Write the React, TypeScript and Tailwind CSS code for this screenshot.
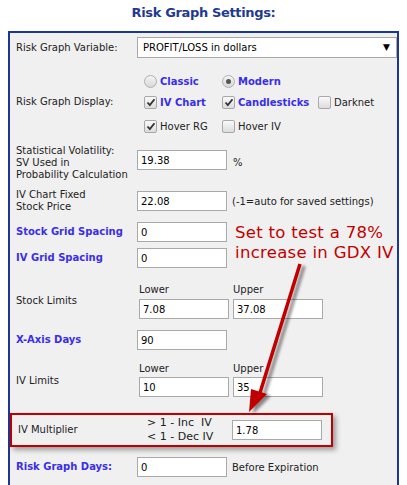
import React from 'react';

const font = { fontFamily: '"DejaVu Sans", Verdana, sans-serif' };

const Input = ({ value, className = '' }: { value: string; className?: string }) => (
  <div className={`w-[90px] h-[20px] bg-white border border-[#a9a9a9] pl-[3px] flex items-center text-[10px] text-black ${className}`}>
    {value}
  </div>
);

const Check = ({ checked }: { checked?: boolean }) => (
  <span className="inline-flex w-[13px] h-[13px] rounded-[2px] border border-[#a8a8a8] bg-gradient-to-b from-[#fafafa] to-[#dcdcdc] items-center justify-center mr-[3px] shrink-0">
    {checked && (
      <svg width="10" height="9" viewBox="0 0 10 9">
        <path d="M1.5 4.5 L3.8 7 L8.5 1.2" stroke="#333" strokeWidth="1.8" fill="none" />
      </svg>
    )}
  </span>
);

const Radio = ({ checked }: { checked?: boolean }) => (
  <span className="inline-flex w-[13px] h-[13px] rounded-full border border-[#b0b0b0] bg-gradient-to-b from-[#f4f4f4] to-[#d8d8d8] items-center justify-center mr-[3px] shrink-0">
    {checked && <span className="w-[5px] h-[5px] rounded-full bg-[#555]" />}
  </span>
);

const Label = ({ children, blue }: { children: React.ReactNode; blue?: boolean }) => (
  <div className={`w-[121px] shrink-0 leading-[12px] ${blue ? 'font-bold text-[#3a2ee6]' : 'text-[#222]'}`}>{children}</div>
);

export default function App() {
  return (
    <div className="relative w-[407px] h-[485px] bg-white overflow-hidden text-[10px]" style={font}>
      <div className="h-[31px] flex justify-center pt-[3px] text-[13px] tracking-[-0.35px] font-bold text-[#1f3a8f]">Risk Graph Settings:</div>
      <div className="mx-[8px] h-[470px] border-2 border-[#1b3791] bg-[#f0f0f0] pl-[6px]">
        <div className="flex items-center mt-[4px] h-[21px]">
          <Label>Risk Graph Variable:</Label>
          <div className="w-[260px] h-[21px] bg-white border border-[#a9a9a9] flex items-center justify-between pl-[5px] pr-[6px] text-black">
            <span>PROFIT/LOSS in dollars</span>
            <span className="text-[9px]">▼</span>
          </div>
        </div>

        <div className="flex items-center h-[18px] mt-[14px] pl-[128px] font-bold text-[#3a2ee6]">
          <div className="flex items-center w-[78px]"><Radio />Classic</div>
          <div className="flex items-center"><Radio checked />Modern</div>
        </div>
        <div className="flex items-center h-[18px] mt-[3px]">
          <Label>Risk Graph Display:</Label>
          <div className="ml-[7px] flex items-center w-[78px] font-bold text-[#3a2ee6]"><Check checked />IV Chart</div>
          <div className="flex items-center w-[96px] font-bold text-[#3a2ee6]"><Check checked />Candlesticks</div>
          <div className="flex items-center text-[#222]"><Check />Darknet</div>
        </div>
        <div className="flex items-center h-[18px] mt-[6px] pl-[128px] text-[#222]">
          <div className="flex items-center w-[78px]"><Check checked />Hover RG</div>
          <div className="flex items-center"><Check />Hover IV</div>
        </div>

        <div className="flex items-start mt-[8px]">
          <div className="mt-[2px]">
            <Label>Statistical Volatility:<br />SV Used in<br />Probability Calculation</Label>
          </div>
          <Input value="19.38" className="mt-[7px]" />
          <span className="ml-[6px] mt-[12px] text-[#222]">%</span>
        </div>
        <div className="flex items-center mt-[8px]">
          <Label>IV Chart Fixed<br />Stock Price</Label>
          <Input value="22.08" />
          <span className="ml-[5px] text-[#222]">(-1=auto for saved settings)</span>
        </div>
        <div className="flex items-center mt-[9px]">
          <Label blue>Stock Grid Spacing</Label>
          <Input value="0" />
        </div>
        <div className="flex items-center mt-[6px]">
          <Label blue>IV Grid Spacing</Label>
          <Input value="0" />
        </div>

        <div className="flex items-end mt-[14px]">
          <Label><div className="mb-[12px]">Stock Limits</div></Label>
          <div className="ml-[2px] flex flex-col">
            <span className="text-[#222] mb-[2px]">Lower</span>
            <Input value="7.08" />
          </div>
          <div className="ml-[4px] flex flex-col">
            <span className="text-[#222] mb-[2px]">Upper</span>
            <Input value="37.08" />
          </div>
        </div>
        <div className="flex items-center mt-[11px]">
          <Label blue>X-Axis Days</Label>
          <Input value="90" />
        </div>
        <div className="flex items-end mt-[11px]">
          <Label><div className="mb-[10px]">IV Limits</div></Label>
          <div className="ml-[2px] flex flex-col">
            <span className="text-[#222] mb-[1px]">Lower</span>
            <Input value="10" />
          </div>
          <div className="ml-[4px] flex flex-col">
            <span className="text-[#222] mb-[1px]">Upper</span>
            <Input value="35" />
          </div>
        </div>

        <div className="-ml-[6px] mt-[16px] w-[323px] h-[34px] border-2 border-[#c00000] shadow-[3px_3px_5px_rgba(0,0,0,0.35)] flex items-center pl-[6px]">
          <Label>IV Multiplier</Label>
          <div className="w-[93px] pl-[8px] text-[#222] leading-[14px] text-[11px]">
            <div>&gt; 1 - Inc&nbsp; IV</div>
            <div>&lt; 1 - Dec IV</div>
          </div>
          <Input value="1.78" className="h-[19px]" />
        </div>

        <div className="flex items-center mt-[10px]">
          <Label blue>Risk Graph Days:</Label>
          <Input value="0" />
          <span className="ml-[5px] text-[#222]">Before Expiration</span>
        </div>
      </div>

      <div className="absolute left-[235px] top-[223px] text-[#c00000] text-[16.5px] tracking-[0.3px] leading-[19.5px]">
        <div>Set to test a 78%</div>
        <div>increase in GDX IV</div>
      </div>

      <svg className="absolute left-0 top-0" width="407" height="485" viewBox="0 0 407 485">
        <defs>
          <filter id="sh" x="-50%" y="-50%" width="200%" height="200%">
            <feGaussianBlur in="SourceAlpha" stdDeviation="1.5" />
            <feOffset dx="4" dy="2" result="b" />
            <feComponentTransfer><feFuncA type="linear" slope="0.45" /></feComponentTransfer>
            <feMerge><feMergeNode /><feMergeNode in="SourceGraphic" /></feMerge>
          </filter>
        </defs>
        <g filter="url(#sh)">
          <line x1="300" y1="264" x2="259" y2="396" stroke="#c00000" strokeWidth="3.5" />
          <polygon points="249,412 251,389 267,394" fill="#c00000" />
        </g>
      </svg>
    </div>
  );
}
